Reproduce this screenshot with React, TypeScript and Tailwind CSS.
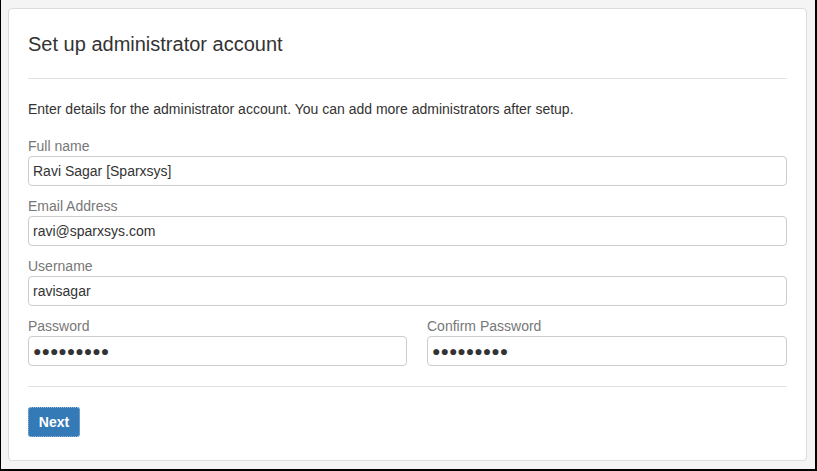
import { useState } from 'react'

const font = 'font-["Liberation_Sans",Arial,sans-serif]'

function Field({ label, value, mask }: { label: string; value: string; mask?: boolean }) {
  const [val, setVal] = useState(value)
  return (
    <div className="mt-[10px] flex flex-col">
      <label className="text-[14px] leading-[20px] text-[#777]">{label}</label>
      <input
        type="text"
        value={mask ? '●'.repeat(val.length) : val}
        onChange={e => !mask && setVal(e.target.value)}
        readOnly={mask}
        className="h-[30px] w-full rounded-[4px] border border-[#ccc] bg-white px-[4px] text-[14px] text-[#333] outline-none"
      />
    </div>
  )
}

export default function App() {
  return (
    <div className={`${font} flex h-[471px] w-[817px] flex-col border-l border-r-2 border-b-2 border-black bg-[#f4f4f4]`}>
      <div className="mt-[8px] ml-[7px] mr-[8px] h-[453px] rounded-[4px] border border-[#dcdcdc] bg-white px-[19px] pt-[24px]">
        <h1 className="text-[20px] leading-[22px] text-[#333]">Set up administrator account</h1>
        <div className="mt-[23px] h-px bg-[#e2e2e2]" />

        <p className="mt-[20px] text-[14px] leading-[20px] text-[#333]">
          Enter details for the administrator account. You can add more administrators after setup.
        </p>

        <div className="mt-[17px]">
          <Field label="Full name" value="Ravi Sagar [Sparxsys]" />
          <Field label="Email Address" value="ravi@sparxsys.com" />
          <Field label="Username" value="ravisagar" />
          <div className="grid grid-cols-[379px_1fr] gap-x-[20px]">
            <Field label="Password" value="123456789" mask />
            <Field label="Confirm Password" value="123456789" mask />
          </div>
        </div>

        <div className="mt-[20px] h-px bg-[#e2e2e2]" />

        <button className="mt-[20px] h-[30px] w-[52px] rounded-[3px] border border-dotted border-[#9dbbd9] bg-[#337ab7] text-[14px] font-bold text-white">
          Next
        </button>
      </div>
    </div>
  )
}
